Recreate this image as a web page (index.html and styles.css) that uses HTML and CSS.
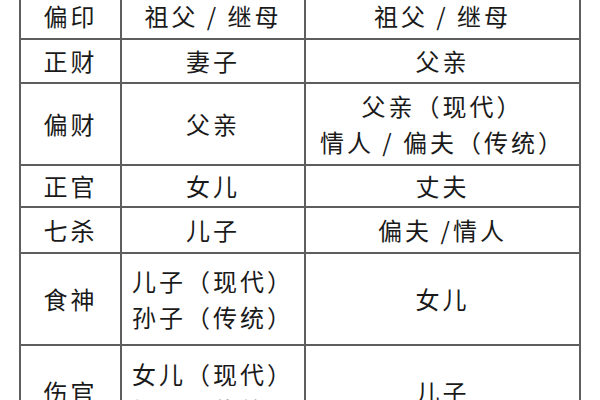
FILE: index.html
```html
<!DOCTYPE html>
<html lang="zh-CN">
<head>
<meta charset="utf-8">
<link rel="stylesheet" href="styles.css">
</head>
<body>
<table class="rel">
  <colgroup>
    <col class="c1">
    <col class="c2">
    <col class="c3">
  </colgroup>
  <tr class="r1"><td>偏印</td><td>祖父 / 继母</td><td>祖父 / 继母</td></tr>
  <tr class="r2"><td>正财</td><td>妻子</td><td>父亲</td></tr>
  <tr class="r3"><td>偏财</td><td>父亲</td><td>父亲（现代）<br>情人 / 偏夫（传统）</td></tr>
  <tr class="r4"><td>正官</td><td>女儿</td><td>丈夫</td></tr>
  <tr class="r5"><td>七杀</td><td>儿子</td><td>偏夫 /情人</td></tr>
  <tr class="r6"><td>食神</td><td>儿子（现代）<br>孙子（传统）</td><td>女儿</td></tr>
  <tr class="r7"><td>伤官</td><td>女儿（现代）<br>祖母（传统）</td><td>儿子</td></tr>
</table>
</body>
</html>
```
FILE: styles.css
```css
html, body {
  margin: 0;
  padding: 0;
  background: #ffffff;
}
body {
  font-family: "Noto Sans CJK SC", "Noto Sans", sans-serif;
  color: #1a1a1a;
  overflow: hidden;
  height: 400px;
}
.rel {
  border-collapse: collapse;
  table-layout: fixed;
  width: 562px;
  margin: -8px 0 0 19px;
}
.c1 { width: 101px; }
.c2 { width: 184px; }
.c3 { width: 275px; }
.rel td {
  border: 2px solid #5e5e5e;
  padding: 0;
  text-align: center;
  vertical-align: middle;
  font-size: 24px;
  letter-spacing: 3px;
  line-height: 36px;
}
.r1 { height: 46px; }
.r2 { height: 44px; }
.r3 { height: 82px; }
.r4 { height: 42px; }
.r5 { height: 46px; }
.r6 { height: 92px; }
.r7 { height: 94px; }
```
